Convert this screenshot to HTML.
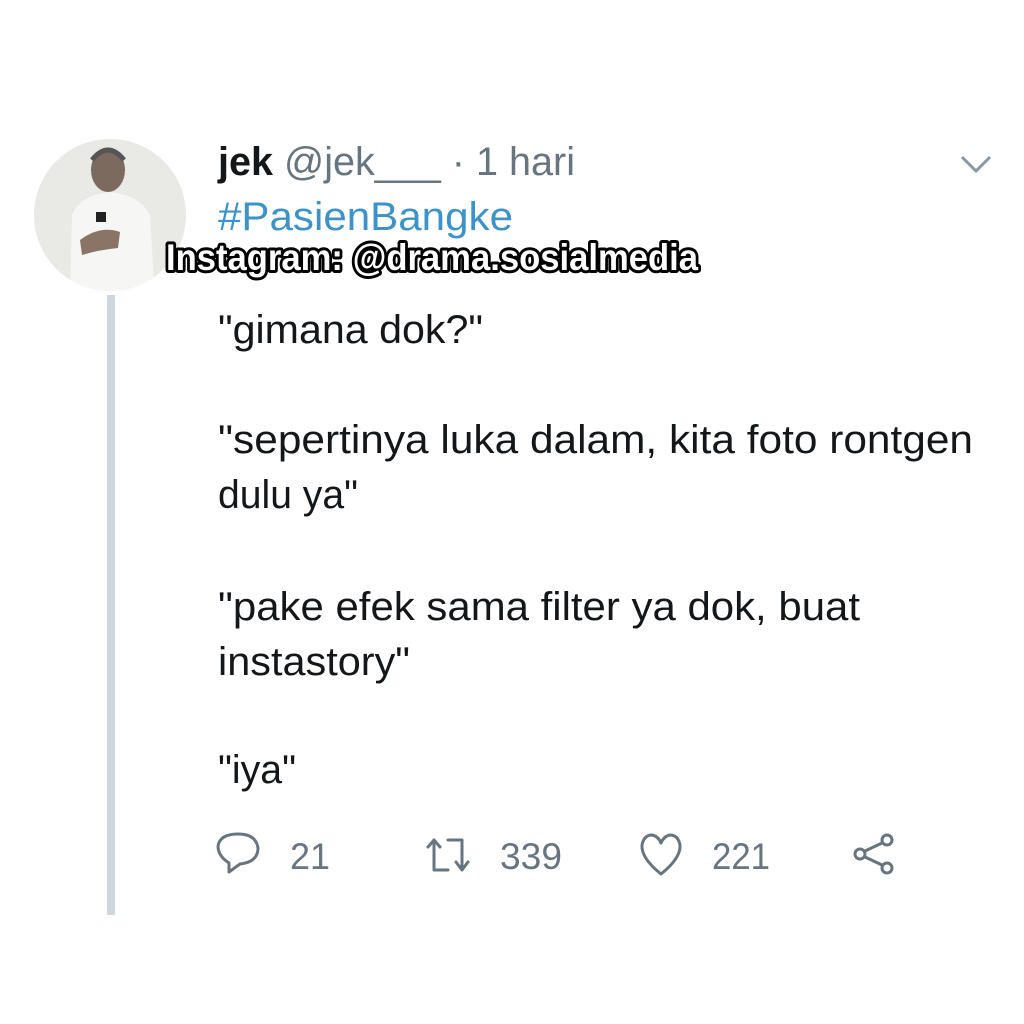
<!DOCTYPE html>
<html><head><meta charset="utf-8"><style>
html,body{margin:0;padding:0;background:#fff;}
svg{display:block}
</style></head><body>
<svg width="1024" height="1024" viewBox="0 0 1024 1024" xmlns="http://www.w3.org/2000/svg" font-family="Liberation Sans, sans-serif">
<defs><clipPath id="c"><circle cx="110" cy="215" r="76"/></clipPath></defs>
<circle cx="110" cy="215" r="76" fill="#ececea"/>
<g clip-path="url(#c)">
<rect x="30" y="130" width="160" height="170" fill="#e9e9e6"/>
<path d="M70 300 L72 215 Q80 195 110 192 Q140 195 150 215 L155 300 Z" fill="#f6f6f4"/>
<ellipse cx="108" cy="170" rx="17" ry="22" fill="#7d6a5e"/>
<path d="M92 160 Q108 140 124 160" stroke="#555" stroke-width="5" fill="none"/>
<path d="M80 240 Q100 225 120 232 L118 248 Q98 250 82 255 Z" fill="#8a7466"/>
<rect x="96" y="212" width="10" height="10" fill="#222"/>
</g>
<rect x="107" y="295" width="8" height="620" fill="#cfd8de"/>
<text x="218" y="175" font-size="40" fill="#14171a" textLength="357" lengthAdjust="spacingAndGlyphs"><tspan font-weight="bold">jek</tspan><tspan fill="#66757f"> @jek___ · 1 hari</tspan></text>
<path d="M962 157 L976 171 L990 157" stroke="#8899a6" stroke-width="3" fill="none"/>
<text x="218" y="230" font-size="40" fill="#3d92c9" textLength="295" lengthAdjust="spacingAndGlyphs">#PasienBangke</text>
<text x="166" y="270" font-size="37" font-weight="bold" fill="#fff" stroke="#000" stroke-width="6" paint-order="stroke" stroke-linejoin="round" textLength="532" lengthAdjust="spacingAndGlyphs">Instagram: @drama.sosialmedia</text>
<g font-size="40" fill="#14171a">
<text x="218" y="343" textLength="265" lengthAdjust="spacingAndGlyphs">"gimana dok?"</text>
<text x="218" y="453" textLength="755" lengthAdjust="spacingAndGlyphs">"sepertinya luka dalam, kita foto rontgen</text>
<text x="218" y="508" textLength="140" lengthAdjust="spacingAndGlyphs">dulu ya"</text>
<text x="218" y="620" textLength="642" lengthAdjust="spacingAndGlyphs">"pake efek sama filter ya dok, buat</text>
<text x="218" y="675" textLength="192" lengthAdjust="spacingAndGlyphs">instastory"</text>
<text x="218" y="783" textLength="78" lengthAdjust="spacingAndGlyphs">"iya"</text>
</g>
<g stroke="#66757f" stroke-width="3" fill="none" stroke-linecap="round" stroke-linejoin="round">
<path d="M229 872 L229 863 Q218 856 218 846 Q220 834 238 834 Q256 834 258 848 Q258 862 240 864 Z"/>
<path d="M434 841 L434 870 L448 870 M428 847 L434 840 L440 847 M448 840 L462 840 L462 869 M456 862 L462 870 L468 862"/>
<path d="M642 845 Q644 835 652 835 Q658 836 661 843 Q664 836 670 835 Q678 835 680 845 Q681 858 661 874 Q641 858 642 845 Z"/>
<circle cx="887" cy="840" r="5"/><circle cx="887" cy="868" r="5"/><circle cx="860" cy="854" r="5"/>
<path d="M865 851 L882 843 M865 857 L882 865"/>
</g>
<g font-size="37" fill="#66757f">
<text x="290" y="869" textLength="40" lengthAdjust="spacingAndGlyphs">21</text>
<text x="500" y="869" textLength="62" lengthAdjust="spacingAndGlyphs">339</text>
<text x="712" y="869" textLength="58" lengthAdjust="spacingAndGlyphs">221</text>
</g>
</svg>
</body></html>
